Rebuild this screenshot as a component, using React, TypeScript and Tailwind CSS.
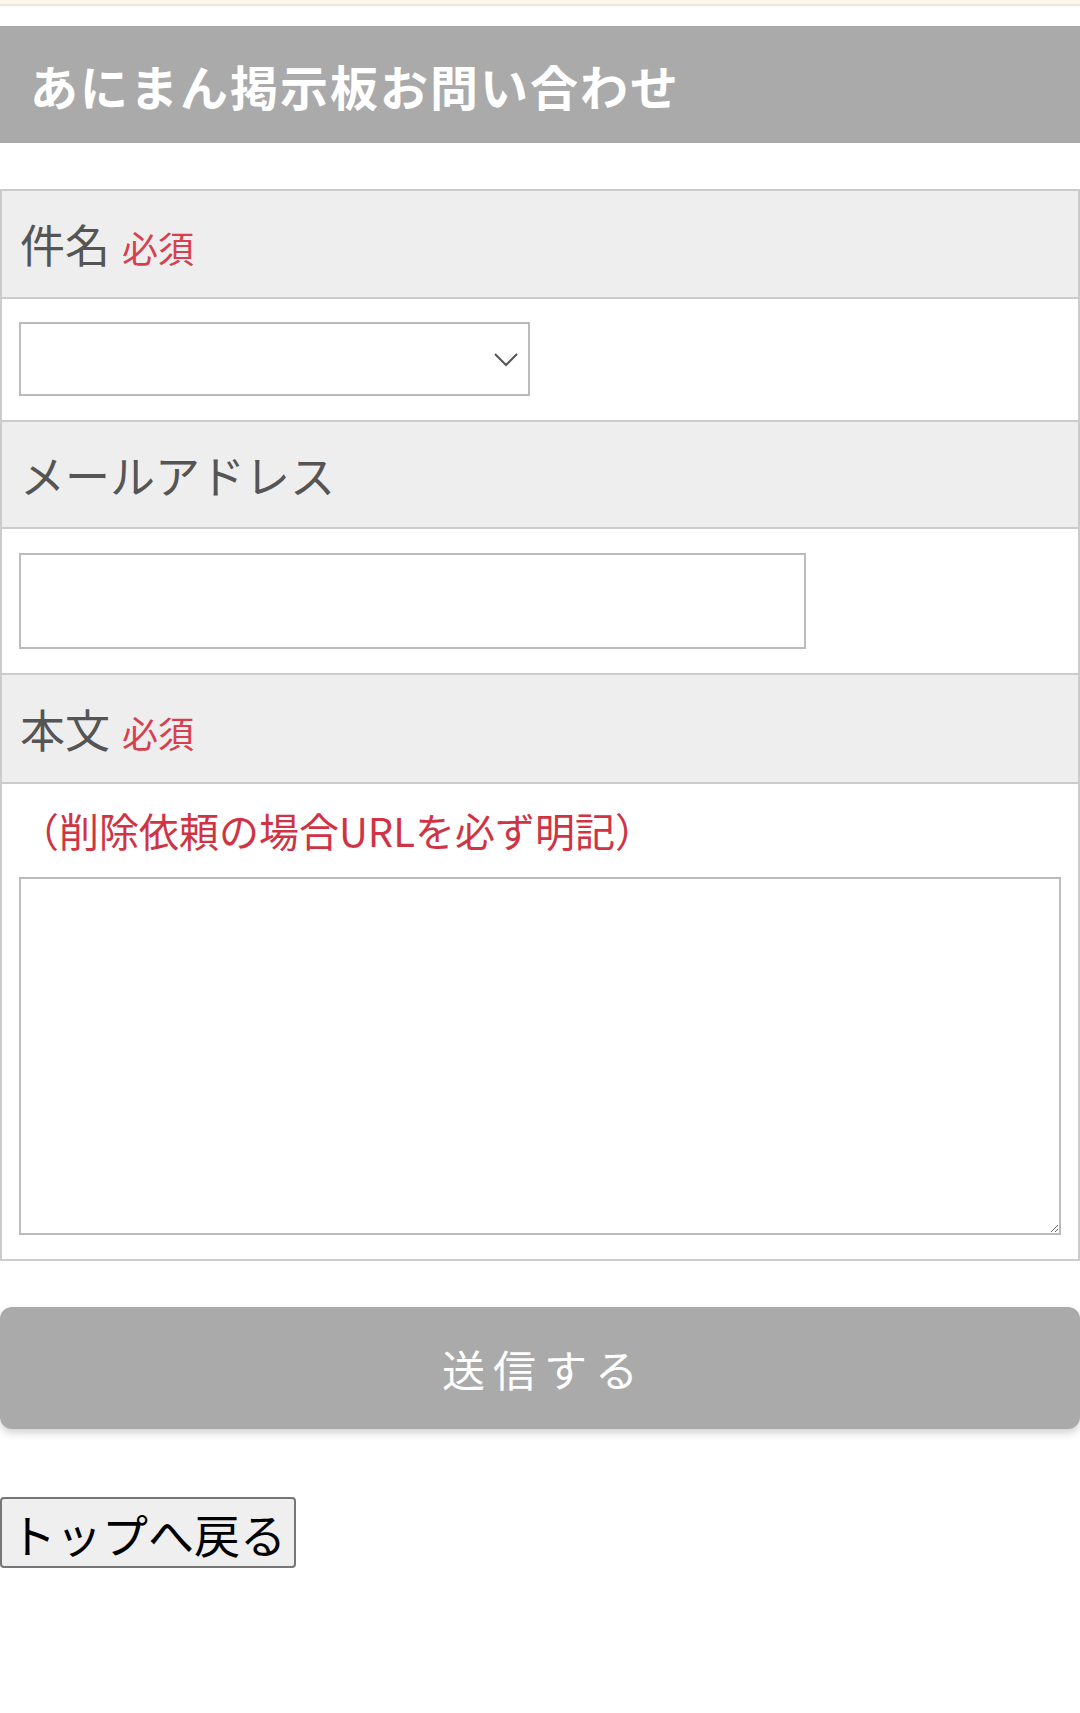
export default function App() {
  const font = { fontFamily: '"Noto Sans CJK JP", "Noto Sans", sans-serif' }

  return (
    <div className="min-h-[1713px] w-[1080px] bg-white" style={font}>
      <div className="h-[6px] bg-[#fbf7ec] border-b-2 border-[#ebe6d8]" />

      <h1 className="mt-[20px] h-[117px] bg-[#aaaaaa] pl-[30px] flex items-center text-[48px] font-bold tracking-[2px] text-white">
        あにまん掲示板お問い合わせ
      </h1>

      <form className="mt-[46px]" onSubmit={(e) => e.preventDefault()}>
        <div className="border-t-2 border-x-2 border-[#cccccc]">
          {/* 件名 */}
          <div className="h-[108px] bg-[#eeeeee] border-b-2 border-[#cccccc] pl-[18px] flex items-center">
            <span className="text-[45px] text-[#555555]">件名</span>
            <span className="ml-[12px] mt-[6px] text-[36px] text-[#d6404e]">必須</span>
          </div>
          <div className="h-[123px] border-b-2 border-[#cccccc] px-[17px] pt-[23px]">
            <div className="relative w-[511px] h-[74px]">
              <select className="appearance-none w-full h-full border-2 border-[#bbbbbb] bg-white outline-none" />
              <svg
                className="absolute right-[12px] top-[31px] pointer-events-none"
                width="24"
                height="14"
                viewBox="0 0 24 14"
                fill="none"
                stroke="#555555"
                strokeWidth="2"
              >
                <path d="M1 1 L12 12 L23 1" />
              </svg>
            </div>
          </div>

          {/* メールアドレス */}
          <div className="h-[107px] bg-[#eeeeee] border-b-2 border-[#cccccc] pl-[18px] flex items-center">
            <span className="text-[45px] text-[#555555]">メールアドレス</span>
          </div>
          <div className="h-[146px] border-b-2 border-[#cccccc] px-[17px] pt-[24px]">
            <input type="email" className="block w-[787px] h-[96px] border-2 border-[#bbbbbb] bg-white outline-none px-3 text-[36px]" />
          </div>

          {/* 本文 */}
          <div className="h-[109px] bg-[#eeeeee] border-b-2 border-[#cccccc] pl-[18px] flex items-center">
            <span className="text-[45px] text-[#555555]">本文</span>
            <span className="ml-[12px] mt-[6px] text-[36px] text-[#d6404e]">必須</span>
          </div>
          <div className="h-[477px] border-b-2 border-[#cccccc] px-[17px]">
            <p className="pt-[17px] h-[93px] leading-[58px] text-[40px] text-[#cf3445]">
              （削除依頼の場合URLを必ず明記）
            </p>
            <textarea className="block w-full h-[358px] border-2 border-[#bbbbbb] bg-white outline-none p-2 text-[36px]" />
          </div>
        </div>

        <button
          type="submit"
          className="mt-[46px] block w-full h-[122px] rounded-[12px] bg-[#aaaaaa] text-white text-[43px] tracking-[8px] pl-[8px] shadow-[0_4px_8px_rgba(0,0,0,0.18)]"
        >
          送信する
        </button>
      </form>

      <button
        type="button"
        className="mt-[68px] block h-[71px] px-[8px] border-2 border-[#767676] rounded-[4px] bg-[#efefef] text-black text-[46px] leading-none"
      >
        トップへ戻る
      </button>
    </div>
  )
}
